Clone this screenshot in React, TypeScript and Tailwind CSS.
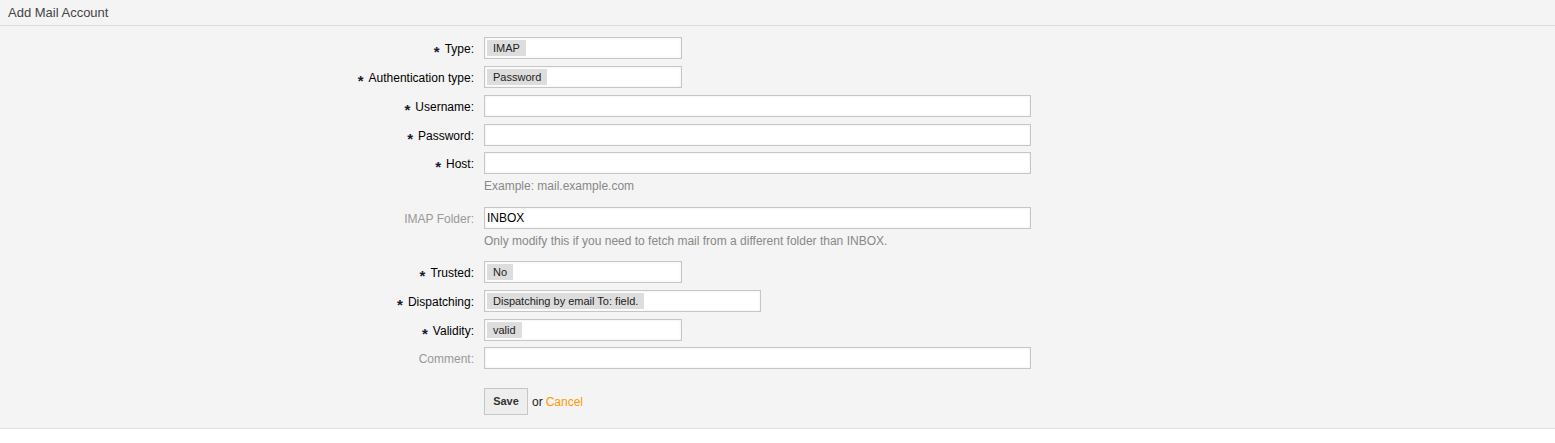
import React from 'react';

const font = { fontFamily: "'Liberation Sans', Arial, sans-serif" };

function Label({ text, required }: { text: string; required?: boolean }) {
  return (
    <div className="w-[474px] shrink-0 flex justify-end items-center h-[22px] pt-[1px] text-[12px]">
      {required && (
        <span className="mr-[5px] text-[15px] font-bold text-[#1a1a2e] translate-y-[3px] inline-block leading-none">*</span>
      )}
      <span className={required ? 'text-[#000]' : 'text-[#999]'}>{text}:</span>
    </div>
  );
}

function Chip({ value }: { value: string }) {
  return (
    <div className="h-[20px] flex items-center pl-[2px]">
      <span className="bg-[#ddd] text-[11px] text-[#222] px-[6px] h-[16px] leading-[16px]">{value}</span>
    </div>
  );
}

function Box({ w, children }: { w: string; children?: React.ReactNode }) {
  return (
    <div className={`${w} h-[22px] bg-white border border-[#c6c6c6] shadow-[inset_0_0_3px_rgba(0,0,0,0.08)]`}>
      {children}
    </div>
  );
}

function Row({ label, required, children, hint, mt }: { label: string; required?: boolean; children: React.ReactNode; hint?: string; mt: string }) {
  return (
    <div className={`flex ${mt}`}>
      <Label text={label} required={required} />
      <div className="ml-[10px]">
        {children}
        {hint && <div className="mt-[5px] h-[14px] leading-[14px] text-[12px] text-[#888]">{hint}</div>}
      </div>
    </div>
  );
}

export default function App() {
  return (
    <div className="w-[1555px] h-[443px] bg-white" style={font}>
      {/* ── Header ── */}
      <div className="h-[26px] bg-[#f4f4f4] border-b border-[#dcdcdc] flex items-center px-[8px]">
        <span className="text-[13px] text-[#444]">Add Mail Account</span>
      </div>

      {/* ── Form ── */}
      <div className="bg-[#f4f4f4] pt-[11px] pb-[13px] border-b border-[#e2e2e2]">
        <div className="flex flex-col">
          <Row label="Type" required mt="mt-0">
            <Box w="w-[198px]"><Chip value="IMAP" /></Box>
          </Row>
          <Row label="Authentication type" required mt="mt-[7px]">
            <Box w="w-[198px]"><Chip value="Password" /></Box>
          </Row>
          <Row label="Username" required mt="mt-[7px]">
            <Box w="w-[547px]" />
          </Row>
          <Row label="Password" required mt="mt-[7px]">
            <Box w="w-[547px]" />
          </Row>
          <Row label="Host" required hint="Example: mail.example.com" mt="mt-[6px]">
            <Box w="w-[547px]" />
          </Row>
          <Row label="IMAP Folder" hint="Only modify this if you need to fetch mail from a different folder than INBOX." mt="mt-[14px]">
            <Box w="w-[547px]">
              <div className="h-[20px] flex items-center pl-[2px] text-[12px] text-black">INBOX</div>
            </Box>
          </Row>
          <Row label="Trusted" required mt="mt-[13px]">
            <Box w="w-[198px]"><Chip value="No" /></Box>
          </Row>
          <Row label="Dispatching" required mt="mt-[7px]">
            <Box w="w-[277px]"><Chip value="Dispatching by email To: field." /></Box>
          </Row>
          <Row label="Validity" required mt="mt-[7px]">
            <Box w="w-[198px]"><Chip value="valid" /></Box>
          </Row>
          <Row label="Comment" mt="mt-[6px]">
            <Box w="w-[547px]" />
          </Row>
        </div>

        <div className="flex items-center mt-[19px] ml-[484px]">
          <button className="h-[27px] w-[44px] bg-[#eee] border border-[#c6c6c6] text-[11px] font-bold text-[#333]">Save</button>
          <span className="ml-[4px] text-[12px] text-[#222]">or</span>
          <span className="ml-[3px] text-[12px] text-[#f90]">Cancel</span>
        </div>
      </div>
    </div>
  );
}
